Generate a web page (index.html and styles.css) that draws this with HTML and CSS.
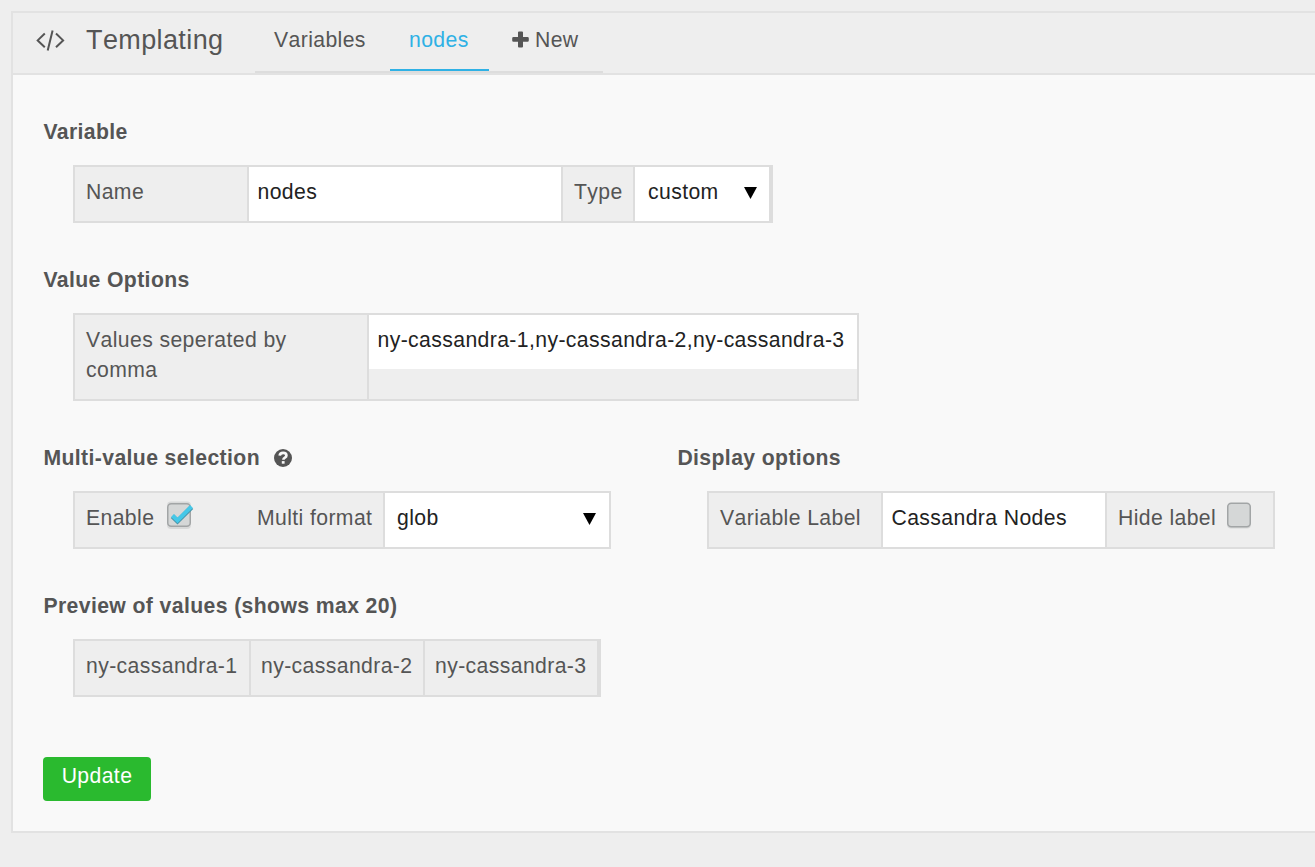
FILE: index.html
```html
<!DOCTYPE html>
<html lang="en">
<head>
<meta charset="utf-8">
<title>Templating</title>
<link rel="stylesheet" href="styles.css">
</head>
<body>
<main class="panel">
  <header class="panel-header">
    <svg class="icon-code" viewBox="0 0 29 22" width="29" height="22"><path d="M8.800 3.500 1.700 10.400l7.100 6.900M20 3.500l7.100 6.900-7.100 6.900M16.600.5 11.700 20.500"/></svg>
    <h1 class="title">Templating</h1>
    <nav class="tabs">
      <a class="tab tab-variables">Variables</a>
      <a class="tab tab-active">nodes</a>
      <a class="tab tab-new"><svg viewBox="0 0 17 17" width="17" height="17"><path d="M7 .5h3q1 0 1 1V6h4.500q1.300 0 1.300 1.200v2.300q0 1.200-1.300 1.200H11v4.800q0 1-1 1H7q-1 0-1-1v-4.800H1.500Q.2 10.700.2 9.500V7.200Q.2 6 1.500 6H6V1.500q0-1 1-1z"/></svg>New</a>
    </nav>
  </header>
  <div class="panel-body">
    <section class="section">
      <h2 class="heading">Variable</h2>
      <div class="row row-end">
        <div class="cell w-name">Name</div>
        <div class="cell field w-value">nodes</div>
        <div class="cell w-type">Type</div>
        <div class="cell field select w-custom">custom<i class="arrow"></i></div>
      </div>
    </section>
    <section class="section">
      <h2 class="heading">Value Options</h2>
      <div class="row row-tall">
        <div class="cell w-values">Values seperated by comma</div>
        <div class="cell field short w-list">ny-cassandra-1,ny-cassandra-2,ny-cassandra-3</div>
      </div>
    </section>
    <div class="columns">
      <section class="section column-left">
        <h2 class="heading">Multi-value selection <svg class="icon-help" viewBox="0 0 18 18" width="18" height="18"><circle cx="9" cy="9" r="9"/><path d="M5.700 6.700Q6 3.900 9.100 3.900q3.300 0 3.300 2.600 0 1.300-1.500 2.100-1.500.8-1.500 2.200"/><rect x="7.800" y="12.100" width="2.800" height="2.600"/></svg></h2>
        <div class="row">
          <div class="cell w-enable">Enable<span class="check-slot"><svg class="check" viewBox="0 0 30 30" width="30" height="30"><rect class="shadow" x="2" y="1.500" width="24" height="27.500" rx="4"/><rect class="box" x="2.750" y="3.750" width="22.500" height="22.500" rx="3.500"/><path class="tick-edge" d="M7.500 16.200 12.500 21.200 26.500 7.200"/><path class="tick" d="M7.500 15.500 12.500 20.500 26.500 6.500"/></svg></span></div>
          <div class="cell w-format">Multi format</div>
          <div class="cell field select w-glob">glob<i class="arrow"></i></div>
        </div>
      </section>
      <section class="section">
        <h2 class="heading">Display options</h2>
        <div class="row">
          <div class="cell w-name">Variable Label</div>
          <div class="cell field w-label">Cassandra Nodes</div>
          <div class="cell w-hide">Hide label<span class="check-slot"><svg class="check" viewBox="0 0 30 30" width="30" height="30"><rect class="shadow" x="2" y="3.500" width="24" height="25" rx="4"/><rect class="box" x="2.750" y="3.250" width="22.500" height="23.500" rx="3.500"/></svg></span></div>
        </div>
      </section>
    </div>
    <section class="section">
      <h2 class="heading">Preview of values (shows max 20)</h2>
      <div class="row row-end">
        <div class="cell w-p1">ny-cassandra-1</div>
        <div class="cell w-p2">ny-cassandra-2</div>
        <div class="cell w-p3">ny-cassandra-3</div>
      </div>
    </section>
    <button class="update">Update</button>
  </div>
</main>
</body>
</html>
```
FILE: styles.css
```css
* { box-sizing: border-box; }
body {
  margin: 0;
  height: 867px;
  padding: 11px 0 0 11px;
  overflow: hidden;
  background: #eee;
  color: #555;
  font: 21.2px/30px "Liberation Sans", Arial, sans-serif;
  font-kerning: none;
  letter-spacing: .39px;
}
.panel {
  height: 822px;
  border: 2px solid #e2e2e2;
  border-right: 0;
  background: #f9f9f9;
}
.panel-header {
  display: flex;
  height: 62px;
  background: #eee;
  border-bottom: 2px solid #e2e2e2;
}
.icon-code {
  flex: none;
  margin: 17px 21px 0 23px;
  fill: none;
  stroke: #555;
  stroke-width: 2;
}
.title {
  width: 169px;
  margin: 12px 0 0;
  font-size: 27px;
  font-weight: 400;
  line-height: 30px;
}
.tabs {
  display: flex;
  width: 348px;
  height: 60px;
  border-bottom: 2px solid #ddd;
}
.tab { height: 58px; padding-top: 12px; }
.tab-variables { width: 135px; padding-left: 19px; }
.tab-active {
  width: 98.500px;
  padding-left: 19px;
  color: #2fb1e5;
  border-bottom: 2px solid #2fb1e5;
  border-radius: 2px 2px 0 0;
}
.tab-new { padding-left: 23px; }
.tab-new svg { margin-right: 6.500px; vertical-align: -.500px; fill: #555; }
.panel-body { padding: 42px 0 0 30px; }
.section { margin-bottom: 42px; }
.heading {
  height: 30px;
  margin: 0 0 18px;
  padding-left: .400px;
  font-size: 21.2px;
  line-height: 30px;
  font-weight: 700;
  font-kerning: normal;
}
.row {
  display: flex;
  width: max-content;
  height: 58px;
  margin-left: 30px;
  border: 2px solid #ddd;
  background: #eee;
}
.row-tall { height: 88px; }
.row-end { border-right-width: 4px; }
.cell {
  display: flex;
  padding: 10px 0 0 11px;
  border-right: 2px solid #ddd;
  white-space: nowrap;
}
.cell:last-child { border-right: 0; }
.field {
  padding-left: 8.500px;
  background: #fff;
  color: #222;
}
.short { height: 54px; }
.select { padding-left: 12px; padding-right: 12px; justify-content: space-between; }
.arrow {
  width: 13px;
  height: 12px;
  margin-top: 10px;
  background: #000;
  clip-path: polygon(0 0, 100% 0, 50% 100%);
}
.w-name { width: 174px; }
.w-value { width: 314px; }
.w-type { width: 72px; }
.w-custom { width: 134px; padding-left: 13px; }
.w-values { width: 294px; padding-right: 60px; white-space: normal; }
.w-list { width: 488px; }
.w-enable { width: 171px; border-right: 0; }
.w-format { width: 139px; }
.w-glob { width: 224px; padding-right: 13px; }
.w-label { width: 224px; }
.w-hide { width: 166px; }
.w-p1 { width: 176px; }
.w-p2 { width: 174px; padding-left: 10px; }
.w-p3 { width: 172px; padding-left: 10px; }
.columns { display: flex; }
.column-left { width: 634px; }
.icon-help { margin-left: 7.500px; vertical-align: -2px; fill: #555; }
.icon-help path { fill: none; stroke: #f9f9f9; stroke-width: 2.700; }
.icon-help rect { fill: #f9f9f9; }
.check-slot { height: 30px; margin: -3px 0 0 11px; }
.w-hide .check-slot { margin-left: 9px; }
.check { display: block; }
.shadow { fill: #c9cccc; opacity: .6; }
.box { fill: #d5d7d7; stroke: #a2a5a6; stroke-width: 1.500; }
.tick { fill: none; stroke: #45c8e8; stroke-width: 4; }
.tick-edge { fill: none; stroke: #4a93a8; stroke-width: 4.800; }
.update {
  display: block;
  width: 108px;
  height: 44px;
  margin-top: 60px;
  padding: 0 0 6px;
  border: 0;
  border-radius: 4px;
  background: #2aba2f;
  color: #fff;
  font: inherit;
  font-kerning: none;
  letter-spacing: inherit;
}
```
